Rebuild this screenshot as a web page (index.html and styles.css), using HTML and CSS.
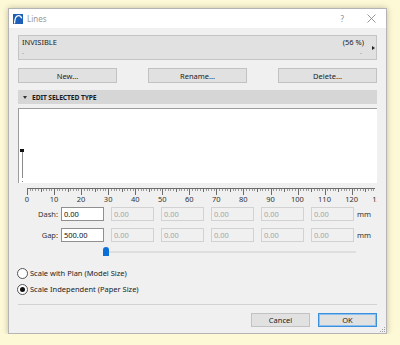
FILE: index.html
```html
<!DOCTYPE html>
<html lang="en">
<head>
    <meta charset="UTF-8">
    <title>Lines</title>
    <link rel="stylesheet" href="styles.css">
</head>
<body>
    <div class="dialog">
        <div class="titlebar">
            <svg class="app-icon" width="10" height="10" viewBox="0 0 10 10">
                <rect width="10" height="10" fill="#1d5fb8"/>
                <path d="M1.5 9.5 C1.8 3.5 3.5 1.6 5.6 1.6 C7.4 1.6 8.3 3 8.6 4.4" stroke="#fff" stroke-width="1.2" fill="none"/>
            </svg>
            <span class="title">Lines</span>
            <span class="help">?</span>
            <svg class="close" width="9" height="9" viewBox="0 0 9 9">
                <path d="M0.5 0.5 L8.5 8.5 M8.5 0.5 L0.5 8.5" stroke="#8a8a8a" stroke-width="0.9"/>
            </svg>
        </div>

        <div class="content">
            <div class="typebox">
                <div class="typerow">
                    <span>INVISIBLE</span>
                    <span>(56 %)</span>
                </div>
                <div class="typedots"><span>.</span><span>.</span></div>
                <span class="more"></span>
            </div>

            <div class="btnrow">
                <button class="btn wide">New...</button>
                <button class="btn wide">Rename...</button>
                <button class="btn wide">Delete...</button>
            </div>

            <div class="section">
                <span class="caret"></span>
                EDIT SELECTED TYPE
            </div>

            <div class="preview">
                <svg width="359" height="75" viewBox="0 0 359 75">
                    <rect x="1" y="40" width="4" height="3" fill="#111"/>
                    <rect x="3" y="43" width="1" height="26" fill="#8a8a8a"/>
                    <rect x="3" y="72" width="1" height="1" fill="#8a8a8a"/>
                </svg>
            </div>

            <div class="ruler">
                <div class="ticks"></div>
                <div class="labels">
                    <span>0</span><span>10</span><span>20</span><span>30</span><span>40</span>
                    <span>50</span><span>60</span><span>70</span><span>80</span><span>90</span>
                    <span>100</span><span>110</span><span>120</span><span>130</span>
                </div>
            </div>

            <div class="field">
                <label>Dash:</label>
                <input class="box" value="0.00">
                <input class="box" value="0.00" disabled>
                <input class="box" value="0.00" disabled>
                <input class="box" value="0.00" disabled>
                <input class="box" value="0.00" disabled>
                <input class="box" value="0.00" disabled>
                <span class="unit">mm</span>
            </div>
            <div class="field gap">
                <label>Gap:</label>
                <input class="box" value="500.00">
                <input class="box" value="0.00" disabled>
                <input class="box" value="0.00" disabled>
                <input class="box" value="0.00" disabled>
                <input class="box" value="0.00" disabled>
                <input class="box" value="0.00" disabled>
                <span class="unit">mm</span>
            </div>

            <div class="slider">
                <div class="track"></div>
                <div class="thumb"></div>
            </div>

            <div class="radios">
                <label class="radio"><span class="dot"></span>Scale with Plan (Model Size)</label>
                <label class="radio"><span class="dot on"></span>Scale Independent (Paper Size)</label>
            </div>

            <div class="sep"></div>

            <div class="footer">
                <button class="btn">Cancel</button>
                <button class="btn ok">OK</button>
            </div>
        </div>

        <svg class="grip" width="5" height="5" viewBox="0 0 5 5">
            <rect x="4" y="0" width="1" height="1" fill="#a0a0a0"/>
            <rect x="2" y="2" width="1" height="1" fill="#a0a0a0"/>
            <rect x="4" y="2" width="1" height="1" fill="#a0a0a0"/>
            <rect x="0" y="4" width="1" height="1" fill="#a0a0a0"/>
            <rect x="2" y="4" width="1" height="1" fill="#a0a0a0"/>
            <rect x="4" y="4" width="1" height="1" fill="#a0a0a0"/>
        </svg>
    </div>
</body>
</html>
```

FILE: styles.css
```css
body {
    margin: 0;
    background: #fdf9d6;
    font-family: "Noto Sans", "Open Sans", sans-serif;
    font-size: 7.5px;
    color: #222;
}

.dialog {
    position: relative;
    margin: 8px 0 0 8px;
    width: 379px;
    height: 326px;
    box-sizing: border-box;
    border: 1px solid #b4b4b4;
    background: #f0f0f0;
    box-shadow: 0 0 6px rgba(0, 0, 0, 0.25);
}

.titlebar {
    height: 19px;
    background: #fff;
    display: flex;
    align-items: center;
    padding-left: 4px;
}
.app-icon {
    margin-right: 4px;
}
.title {
    font-size: 8px;
    color: #9a9a9a;
    flex: 1;
}
.help {
    font-size: 8px;
    color: #8a8a8a;
    margin-right: 23px;
}
.close {
    margin-right: 10px;
}

.content {
    padding: 7px 9px 0 9px;
}

.typebox {
    position: relative;
    height: 25px;
    box-sizing: border-box;
    border: 1px solid #c4c4c4;
    background: #e1e1e1;
    padding: 2px 12px 0 3px;
}
.typerow {
    display: flex;
    justify-content: space-between;
    line-height: 9px;
}
.typedots {
    display: flex;
    justify-content: space-between;
    color: #999;
    line-height: 6px;
    margin-top: 1px;
    padding-right: 2px;
}
.more {
    position: absolute;
    right: 1px;
    top: 10px;
    border-left: 3px solid #222;
    border-top: 2px solid transparent;
    border-bottom: 2px solid transparent;
}

.btnrow {
    display: flex;
    justify-content: space-between;
    margin-top: 8px;
}
.btn {
    font-family: inherit;
    font-size: 7.5px;
    color: #222;
    height: 14px;
    width: 59px;
    padding: 0;
    box-sizing: border-box;
    border: 1px solid #c2c2c2;
    background: #e1e1e1;
}
.btn.wide {
    width: 99px;
    height: 15px;
}
.btn.ok {
    border-color: #3c8fdc;
    box-shadow: inset 0 0 0 1px #8cc0ee;
}

.section {
    margin-top: 7px;
    height: 14px;
    background: #d6d6d6;
    display: flex;
    align-items: center;
    font-weight: bold;
    font-size: 6.7px;
    letter-spacing: -0.1px;
    color: #1a1a1a;
    padding-left: 5px;
}
.caret {
    border-top: 3px solid #333;
    border-left: 2.5px solid transparent;
    border-right: 2.5px solid transparent;
    margin-right: 5px;
}

.preview {
    margin-top: 4px;
    height: 75px;
    box-sizing: border-box;
    background: #fff;
    border-top: 1px solid #9d9d9d;
    border-left: 1px solid #9d9d9d;
    overflow: hidden;
}
.preview svg {
    display: block;
}

.ruler {
    height: 20px;
    margin-top: 1px;
    padding-top: 4px;
    box-sizing: border-box;
    overflow: hidden;
}
.ticks {
    margin-left: 9px;
    width: 348px;
    height: 7px;
    background:
        linear-gradient(#6c6c6c, #6c6c6c) top left / 100% 1px no-repeat,
        repeating-linear-gradient(to right, #6c6c6c 0 1px, transparent 1px 27.06px) top left / 100% 7px no-repeat,
        repeating-linear-gradient(to right, #6c6c6c 0 1px, transparent 1px 13.53px) top left / 100% 4px no-repeat,
        repeating-linear-gradient(to right, #9a9a9a 0 1px, transparent 1px 2.706px) top left / 100% 3px no-repeat;
}
.labels {
    display: flex;
    margin-left: -4.53px;
    line-height: 8px;
    color: #333;
}
.labels span {
    flex: 0 0 27.06px;
    text-align: center;
}

.field {
    display: flex;
    align-items: center;
    margin-top: 3px;
    height: 14px;
}
.field.gap {
    margin-top: 7px;
}
.field label {
    width: 40px;
    text-align: right;
    margin-right: 3px;
    color: #333;
}
.box {
    width: 43px;
    height: 14px;
    box-sizing: border-box;
    margin: 0 7px 0 0;
    padding: 0 2px;
    font-family: inherit;
    font-size: 7.5px;
    color: #111;
    background: #fff;
    border: 1px solid #8f8f8f;
}
.box:disabled {
    background: #f0f0f0;
    border-color: #d2d2d2;
    color: #a5a5a5;
}
.unit {
    margin-left: -4px;
    color: #333;
}

.slider {
    position: relative;
    margin: 5px 0 0 86px;
    width: 252px;
    height: 9px;
}
.track {
    position: absolute;
    left: 0;
    right: 0;
    top: 4px;
    height: 2px;
    background: #dedede;
}
.thumb {
    position: absolute;
    left: -1px;
    top: 0;
    width: 6px;
    height: 9px;
    background: #0a6fd6;
    border-radius: 3px 3px 0 0;
}

.radios {
    margin-top: 11px;
    display: flex;
    flex-direction: column;
    gap: 4px;
}
.radio {
    display: flex;
    align-items: center;
    height: 12px;
    color: #222;
}
.dot {
    width: 11px;
    height: 11px;
    box-sizing: border-box;
    border: 1px solid #555;
    border-radius: 50%;
    background: #fff;
    margin: 0 2px 0 -1px;
    display: flex;
    align-items: center;
    justify-content: center;
}
.dot.on::after {
    content: "";
    width: 5px;
    height: 5px;
    border-radius: 50%;
    background: #111;
}

.sep {
    margin-top: 9px;
    height: 1px;
    background: #d2d2d2;
}

.footer {
    display: flex;
    justify-content: flex-end;
    gap: 8px;
    margin-top: 8px;
}

.grip {
    position: absolute;
    right: 1px;
    bottom: 1px;
}
```
